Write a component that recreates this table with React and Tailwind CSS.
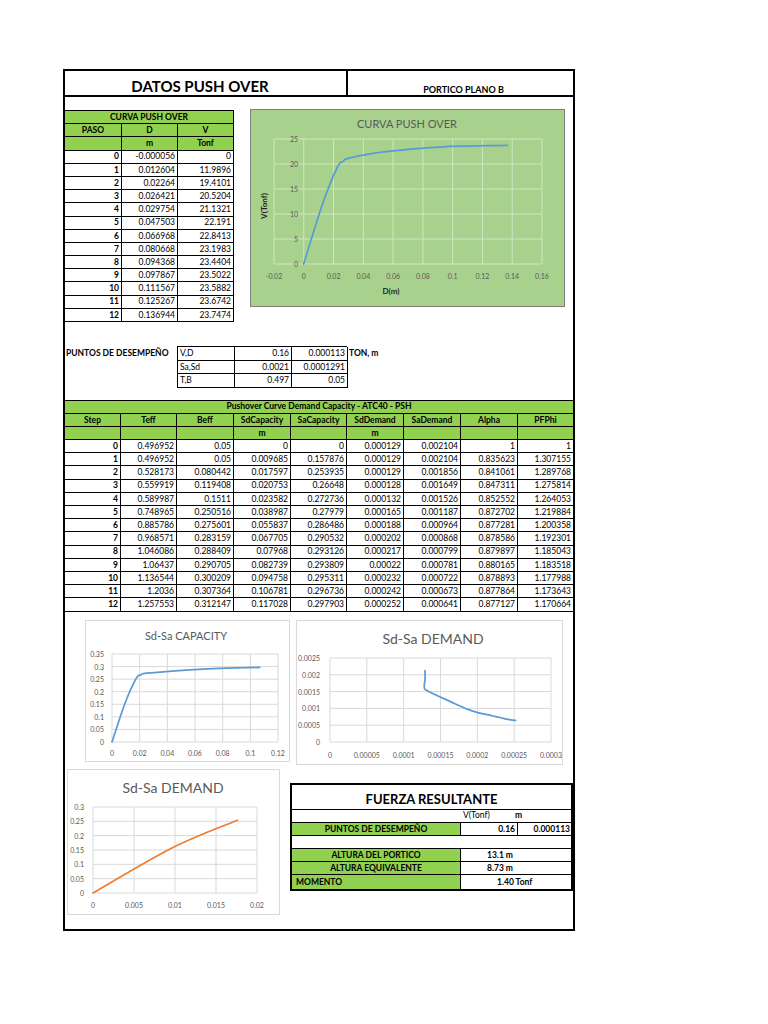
import React from "react";

const GREEN = "bg-[#92d050]";

const pushD = ["-0.000056","0.012604","0.02264","0.026421","0.029754","0.047503","0.066968","0.080668","0.094368","0.097867","0.111567","0.125267","0.136944"];
const pushV = ["0","11.9896","19.4101","20.5204","21.1321","22.191","22.8413","23.1983","23.4404","23.5022","23.5882","23.6742","23.7474"];

const big = [
  ["0","0.496952","0.05","0","0","0.000129","0.002104","1","1"],
  ["1","0.496952","0.05","0.009685","0.157876","0.000129","0.002104","0.835623","1.307155"],
  ["2","0.528173","0.080442","0.017597","0.253935","0.000129","0.001856","0.841061","1.289768"],
  ["3","0.559919","0.119408","0.020753","0.26648","0.000128","0.001649","0.847311","1.275814"],
  ["4","0.589987","0.1511","0.023582","0.272736","0.000132","0.001526","0.852552","1.264053"],
  ["5","0.748965","0.250516","0.038987","0.27979","0.000165","0.001187","0.872702","1.219884"],
  ["6","0.885786","0.275601","0.055837","0.286486","0.000188","0.000964","0.877281","1.200358"],
  ["7","0.968571","0.283159","0.067705","0.290532","0.000202","0.000868","0.878586","1.192301"],
  ["8","1.046086","0.288409","0.07968","0.293126","0.000217","0.000799","0.879897","1.185043"],
  ["9","1.06437","0.290705","0.082739","0.293809","0.00022","0.000781","0.880165","1.183518"],
  ["10","1.136544","0.300209","0.094758","0.295311","0.000232","0.000722","0.878893","1.177988"],
  ["11","1.2036","0.307364","0.106781","0.296736","0.000242","0.000673","0.877864","1.173643"],
  ["12","1.257553","0.312147","0.117028","0.297903","0.000252","0.000641","0.877127","1.170664"],
];

const heads = ["Step","Teff","Beff","SdCapacity","SaCapacity","SdDemand","SaDemand","Alpha","PFPhi"];

function smooth(pts) {
  if (!pts.length) return "";
  let d = `M${pts[0][0].toFixed(2)},${pts[0][1].toFixed(2)}`;
  for (let i = 0; i < pts.length - 1; i++) {
    const p0 = pts[i - 1] || pts[i];
    const p1 = pts[i];
    const p2 = pts[i + 1];
    const p3 = pts[i + 2] || p2;
    const c1 = [p1[0] + (p2[0] - p0[0]) / 6, p1[1] + (p2[1] - p0[1]) / 6];
    const c2 = [p2[0] - (p3[0] - p1[0]) / 6, p2[1] - (p3[1] - p1[1]) / 6];
    d += ` C${c1[0].toFixed(2)},${c1[1].toFixed(2)} ${c2[0].toFixed(2)},${c2[1].toFixed(2)} ${p2[0].toFixed(2)},${p2[1].toFixed(2)}`;
  }
  return d;
}

function Chart({ w, h, plot, xd, yd, xt, yt, yLabelX, xLabelY, data, color, grid, label, title, titleX, titleY, titleSize, children }) {
  const sx = (v) => plot.l + ((v - xd[0]) / (xd[1] - xd[0])) * (plot.r - plot.l);
  const sy = (v) => plot.b - ((v - yd[0]) / (yd[1] - yd[0])) * (plot.b - plot.t);
  const pts = data.map(([x, y]) => [sx(x), sy(y)]);
  return (
    <svg width={w} height={h} className="block">
      {xt.map(([v]) => (
        <line key={"vx" + v} x1={sx(v)} x2={sx(v)} y1={plot.t} y2={plot.b} stroke={grid} strokeWidth="1" />
      ))}
      {yt.map(([v]) => (
        <line key={"hy" + v} x1={plot.l} x2={plot.r} y1={sy(v)} y2={sy(v)} stroke={grid} strokeWidth="1" />
      ))}
      {yt.map(([v, s]) => (
        <text key={"ly" + v} x={yLabelX} y={sy(v)} textAnchor="end" dominantBaseline="central" fontSize="7" fill={label}>{s}</text>
      ))}
      {xt.map(([v, s]) => (
        <text key={"lx" + v} x={sx(v)} y={xLabelY} textAnchor="middle" dominantBaseline="central" fontSize="7" fill={label}>{s}</text>
      ))}
      <text x={titleX} y={titleY} textAnchor="middle" dominantBaseline="central" fontSize={titleSize} fill="#595959">{title}</text>
      <path d={smooth(pts)} fill="none" stroke={color} strokeWidth="1.75" strokeLinejoin="round" strokeLinecap="round" />
      {children}
    </svg>
  );
}

const C = ({ children, className = "" }) => (
  <div className={`flex items-center border-r border-b border-black leading-none overflow-hidden whitespace-nowrap ${className}`}>{children}</div>
);

function LeftTable() {
  return (
    <div className="grid grid-cols-[57px_56px_56px] auto-rows-[13.2px] border-t border-black w-[169px] text-[8.5px]">
      <C className={`col-span-3 justify-center font-bold ${GREEN}`}>CURVA PUSH OVER</C>
      <C className={`justify-center font-bold ${GREEN}`}>PASO</C>
      <C className={`justify-center font-bold ${GREEN}`}>D</C>
      <C className={`justify-center font-bold ${GREEN}`}>V</C>
      <C className={GREEN}></C>
      <C className={`justify-center font-bold ${GREEN}`}>m</C>
      <C className={`justify-center font-bold ${GREEN}`}>Tonf</C>
      {pushD.map((d, i) => (
        <React.Fragment key={i}>
          <C className="justify-end pr-[2px] font-bold">{i}</C>
          <C className="justify-end pr-[2px]">{d}</C>
          <C className="justify-end pr-[2px]">{pushV[i]}</C>
        </React.Fragment>
      ))}
    </div>
  );
}

function BigTable() {
  return (
    <div className="grid grid-cols-[56px_56px_57px_57px_56px_57px_57px_57px_55px] auto-rows-[13.2px] border-t border-black w-[508px] text-[8.5px]">
      <div className={`col-span-9 flex items-center justify-center border-b border-black font-bold leading-none ${GREEN}`}>Pushover Curve Demand Capacity - ATC40 - PSH</div>
      {heads.map((hd, i) => (
        <C key={hd} className={`justify-center font-bold ${GREEN} ${i === 8 ? "border-r-0" : ""}`}>{hd}</C>
      ))}
      {heads.map((hd, i) => (
        <C key={"u" + hd} className={`justify-center font-bold ${GREEN} ${i === 8 ? "border-r-0" : ""}`}>{i === 3 || i === 5 ? "m" : ""}</C>
      ))}
      {big.map((row, r) => (
        <React.Fragment key={r}>
          {row.map((v, i) => (
            <C key={i} className={`justify-end pr-[2px] ${i === 0 ? "font-bold" : ""} ${i === 8 ? "border-r-0" : ""}`}>{v}</C>
          ))}
        </React.Fragment>
      ))}
    </div>
  );
}

function Fuerza() {
  return (
    <div className="w-[283px] border-2 border-black grid grid-cols-[169px_57px_53px] grid-rows-[25px_repeat(6,13.2px)] text-[8.5px] leading-none">
      <div className="col-span-3 flex items-end justify-center pb-[3px] border-b border-black text-[13px] font-bold">FUERZA RESULTANTE</div>
      <div className="border-b border-black"></div>
      <div className="col-span-2 flex items-center border-b border-black">
        <span className="pl-[2px] w-[54px]">V(Tonf)</span>
        <span className="font-bold">m</span>
      </div>
      <C className={`justify-center font-bold ${GREEN}`}>PUNTOS DE DESEMPEÑO</C>
      <C className="justify-end pr-[2px] font-bold">0.16</C>
      <C className="justify-end pr-[1px] font-bold border-r-0">0.000113</C>
      <div className="col-span-3 border-b border-black"></div>
      <C className={`justify-center font-bold ${GREEN}`}>ALTURA DEL PORTICO</C>
      <C className="col-span-2 border-r-0 pl-[26px] font-bold">13.1 m</C>
      <C className={`justify-center font-bold ${GREEN}`}>ALTURA EQUIVALENTE</C>
      <C className="col-span-2 border-r-0 pl-[26px] font-bold">8.73 m</C>
      <C className={`justify-start pl-[4px] font-bold border-b-0 ${GREEN}`}>MOMENTO</C>
      <C className="col-span-2 border-r-0 border-b-0 pl-[36px] font-bold">1.40 Tonf</C>
    </div>
  );
}

const curve1 = pushD.map((d, i) => [parseFloat(d), parseFloat(pushV[i])]);
const capData = big.slice(0, 12).map((r) => [parseFloat(r[3]), parseFloat(r[4])]);
const demData = big.map((r) => [parseFloat(r[5]), parseFloat(r[6])]);
const dem2Data = big.slice(0, 3).map((r) => [parseFloat(r[3]), parseFloat(r[4])]);

export default function App() {
  return (
    <div className="w-[768px] h-[1024px] bg-white pt-[69px] pl-[63px] text-black font-['Lato',sans-serif]">
      <div className="w-[512px] h-[862px] border-2 border-black flex flex-col">
        {/* header */}
        <div className="flex h-[26px] border-b-2 border-black shrink-0">
          <div className="w-[283px] border-r-2 border-black flex items-end justify-center pb-[1px] pr-[11px] text-[15px] font-bold leading-none">DATOS PUSH OVER</div>
          <div className="flex-1 flex items-end justify-center pb-[1px] pl-[6px] text-[9px] font-bold leading-none">PORTICO PLANO B</div>
        </div>

        {/* top section */}
        <div className="flex items-start mt-[13px]">
          <LeftTable />
          <div className="ml-[16px] -mt-[1px] w-[315px] h-[198px] bg-[#a9d18e] border border-[#7f7f7f]">
            <Chart
              w={313} h={196}
              plot={{ l: 23, r: 291, t: 29, b: 154 }}
              xd={[-0.02, 0.16]} yd={[0, 25]}
              xt={[[-0.02,"-0.02"],[0,"0"],[0.02,"0.02"],[0.04,"0.04"],[0.06,"0.06"],[0.08,"0.08"],[0.1,"0.1"],[0.12,"0.12"],[0.14,"0.14"],[0.16,"0.16"]]}
              yt={[[0,"0"],[5,"5"],[10,"10"],[15,"15"],[20,"20"],[25,"25"]]}
              yLabelX={47} xLabelY={166}
              data={curve1} color="#5b9bd5" grid="#cfe5c0" label="#595959"
              title="CURVA PUSH OVER" titleX={156} titleY={13} titleSize={11}
            >
              <text x="13" y="96" transform="rotate(-90 13 96)" textAnchor="middle" dominantBaseline="central" fontSize="8" fontWeight="700" fill="#262626">V(Tonf)</text>
              <text x="140" y="181" textAnchor="middle" dominantBaseline="central" fontSize="8" fontWeight="700" fill="#262626">D(m)</text>
            </Chart>
          </div>
        </div>

        {/* puntos de desempeño */}
        <div className="flex items-start mt-[24px] text-[8.5px] leading-none">
          <div className="w-[112px] h-[13.5px] flex items-center pl-[1px] font-bold whitespace-nowrap">PUNTOS DE DESEMPEÑO</div>
          <div className="grid grid-cols-[57px_57px_56px] auto-rows-[13.5px] border-l border-t border-black w-[170px]">
            <C className="pl-[2px]">V,D</C>
            <C className="justify-end pr-[2px]">0.16</C>
            <C className="justify-end pr-[2px]">0.000113</C>
            <C className="pl-[2px]">Sa,Sd</C>
            <C className="justify-end pr-[2px]">0.0021</C>
            <C className="justify-end pr-[2px]">0.0001291</C>
            <C className="pl-[2px]">T,B</C>
            <C className="justify-end pr-[2px]">0.497</C>
            <C className="justify-end pr-[2px]">0.05</C>
          </div>
          <div className="h-[13.5px] flex items-center pl-[2px] font-bold">TON, m</div>
        </div>

        {/* big table */}
        <div className="mt-[12px]">
          <BigTable />
        </div>

        {/* charts row */}
        <div className="flex items-start mt-[8px]">
          <div className="ml-[20px] w-[205px] h-[142px] bg-white border border-[#d9d9d9]">
            <Chart
              w={203} h={140}
              plot={{ l: 26, r: 192, t: 33, b: 121 }}
              xd={[0, 0.12]} yd={[0, 0.35]}
              xt={[[0,"0"],[0.02,"0.02"],[0.04,"0.04"],[0.06,"0.06"],[0.08,"0.08"],[0.1,"0.1"],[0.12,"0.12"]]}
              yt={[[0,"0"],[0.05,"0.05"],[0.1,"0.1"],[0.15,"0.15"],[0.2,"0.2"],[0.25,"0.25"],[0.3,"0.3"],[0.35,"0.35"]]}
              yLabelX={18} xLabelY={132}
              data={capData} color="#5b9bd5" grid="#d9d9d9" label="#595959"
              title="Sd-Sa CAPACITY" titleX={100} titleY={14} titleSize={11}
            />
          </div>
          <div className="ml-[6px] w-[267px] h-[145px] bg-white border border-[#d9d9d9]">
            <Chart
              w={265} h={143}
              plot={{ l: 33, r: 254, t: 37, b: 121 }}
              xd={[0, 0.0003]} yd={[0, 0.0025]}
              xt={[[0,"0"],[0.00005,"0.00005"],[0.0001,"0.0001"],[0.00015,"0.00015"],[0.0002,"0.0002"],[0.00025,"0.00025"],[0.0003,"0.0003"]]}
              yt={[[0,"0"],[0.0005,"0.0005"],[0.001,"0.001"],[0.0015,"0.0015"],[0.002,"0.002"],[0.0025,"0.0025"]]}
              yLabelX={23} xLabelY={134}
              data={demData} color="#5b9bd5" grid="#d9d9d9" label="#595959"
              title="Sd-Sa DEMAND" titleX={136} titleY={17} titleSize={14}
            />
          </div>
        </div>

        {/* bottom row */}
        <div className="flex items-start mt-[4px]">
          <div className="ml-[2px] w-[213px] h-[146px] bg-white border border-[#d9d9d9]">
            <Chart
              w={211} h={144}
              plot={{ l: 25, r: 189, t: 37, b: 123 }}
              xd={[0, 0.02]} yd={[0, 0.3]}
              xt={[[0,"0"],[0.005,"0.005"],[0.01,"0.01"],[0.015,"0.015"],[0.02,"0.02"]]}
              yt={[[0,"0"],[0.05,"0.05"],[0.1,"0.1"],[0.15,"0.15"],[0.2,"0.2"],[0.25,"0.25"],[0.3,"0.3"]]}
              yLabelX={16} xLabelY={135}
              data={dem2Data} color="#ed7d31" grid="#d9d9d9" label="#595959"
              title="Sd-Sa DEMAND" titleX={105} titleY={17} titleSize={14}
            />
          </div>
          <div className="ml-[10px] mt-[14px]">
            <Fuerza />
          </div>
        </div>
      </div>
    </div>
  );
}
